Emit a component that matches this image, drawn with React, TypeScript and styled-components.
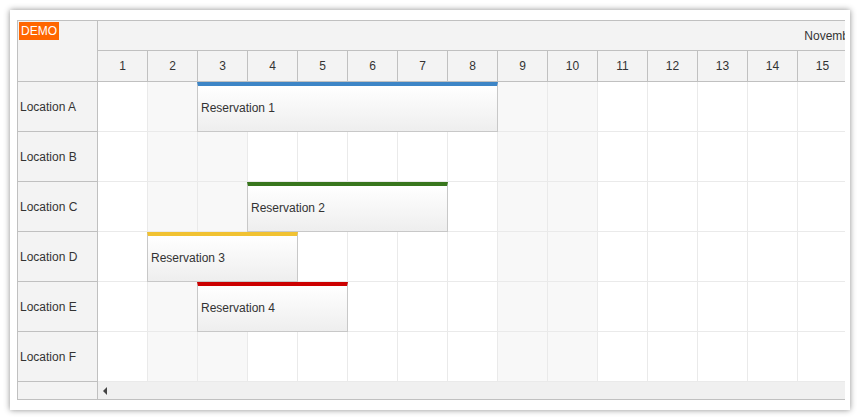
import { createGlobalStyle, styled } from 'styled-components'

const days = Array.from({ length: 15 }, (_, i) => i + 1)
const weekend = [2, 3, 9, 10]

interface Reservation {
  text: string
  start: number
  span: number
  color: string
}

const resources: { name: string; events: Reservation[] }[] = [
  { name: 'Location A', events: [{ text: 'Reservation 1', start: 2, span: 6, color: '#3d85c6' }] },
  { name: 'Location B', events: [] },
  { name: 'Location C', events: [{ text: 'Reservation 2', start: 3, span: 4, color: '#38761d' }] },
  { name: 'Location D', events: [{ text: 'Reservation 3', start: 1, span: 3, color: '#f1c232' }] },
  { name: 'Location E', events: [{ text: 'Reservation 4', start: 2, span: 3, color: '#cc0000' }] },
  { name: 'Location F', events: [] },
]

const App = () => {
  return (
    <>
      <Global />
      <Panel>
        <Scheduler>
          <LeftColumn>
            <Corner>
              <Demo>DEMO</Demo>
            </Corner>
            {resources.map((r) => (
              <RowHeader key={r.name}>{r.name}</RowHeader>
            ))}
            <CornerBottom />
          </LeftColumn>
          <Main>
            <MonthRow>
              <MonthCell>November 2025</MonthCell>
            </MonthRow>
            <DayRow>
              {days.map((d) => (
                <DayCell key={d}>{d}</DayCell>
              ))}
            </DayRow>
            {resources.map((r) => (
              <GridRow key={r.name}>
                {days.map((d) => (
                  <Cell key={d} $weekend={weekend.includes(d)} />
                ))}
                {r.events.map((e) => (
                  <Event
                    key={e.text}
                    $color={e.color}
                    style={{ left: e.start * 50 - 1, width: e.span * 50 + 1 }}
                  >
                    {e.text}
                  </Event>
                ))}
              </GridRow>
            ))}
            <ScrollStrip>
              <Arrow />
            </ScrollStrip>
          </Main>
        </Scheduler>
      </Panel>
    </>
  )
}

export default App

const Global = createGlobalStyle`
body {
  margin: 0;
  background: #ffffff;
  font-family: "Liberation Sans", Arial, sans-serif;
  font-size: 12px;
  color: #333333;
}
`

const Panel = styled.div`
margin: 10px;
width: 840px;
height: 400px;
box-sizing: border-box;
background: #ffffff;
box-shadow: 0 0 6px rgba(0, 0, 0, 0.45);
padding: 10px 5px 0 7px;
`

const Scheduler = styled.div`
display: flex;
width: 828px;
border-top: 1px solid #c0c0c0;
border-bottom: 1px solid #c0c0c0;
border-left: 1px solid #c0c0c0;
box-sizing: border-box;
`

const LeftColumn = styled.div`
width: 79px;
flex-shrink: 0;
display: flex;
flex-direction: column;
border-right: 1px solid #c0c0c0;
background: #f3f3f3;
`

const Corner = styled.div`
border-bottom: 1px solid #c0c0c0;
padding: 1px 0 0 1px;
height: 59px;
`

const Demo = styled.div`
display: inline-block;
background: #ff6600;
color: #ffffff;
font-size: 12px;
line-height: 18px;
padding: 0 2px;
`

const RowHeader = styled.div`
height: 49px;
border-bottom: 1px solid #c0c0c0;
display: flex;
align-items: center;
padding: 1px 0 0 2px;
box-sizing: border-box;
height: 50px;
`

const CornerBottom = styled.div`
height: 17px;
`

const Main = styled.div`
flex: 1;
overflow: hidden;
display: flex;
flex-direction: column;
`

const MonthRow = styled.div`
height: 29px;
border-bottom: 1px solid #c0c0c0;
background: #f3f3f3;
display: flex;
`

const MonthCell = styled.div`
width: 1498px;
flex-shrink: 0;
display: flex;
align-items: center;
justify-content: center;
`

const DayRow = styled.div`
height: 30px;
border-bottom: 1px solid #c0c0c0;
background: #f3f3f3;
display: flex;
`

const DayCell = styled.div`
width: 50px;
flex-shrink: 0;
box-sizing: border-box;
border-right: 1px solid #c0c0c0;
display: flex;
align-items: center;
justify-content: center;
`

const GridRow = styled.div`
position: relative;
height: 50px;
display: flex;
box-sizing: border-box;
border-bottom: 1px solid #eaeaea;
&:last-of-type {
  border-bottom: none;
}
`

const Cell = styled.div<{ $weekend: boolean }>`
width: 50px;
flex-shrink: 0;
box-sizing: border-box;
border-right: 1px solid #eaeaea;
background: ${(p) => (p.$weekend ? '#f8f8f8' : '#ffffff')};
`

const Event = styled.div<{ $color: string }>`
position: absolute;
top: 0;
height: 50px;
box-sizing: border-box;
border: 1px solid #c8c8c8;
border-top: 4px solid ${(p) => p.$color};
background: linear-gradient(to bottom, #ffffff, #eeeeee);
display: flex;
align-items: center;
padding: 0 0 1px 3px;
color: #333333;
white-space: nowrap;
overflow: hidden;
`

const ScrollStrip = styled.div`
height: 17px;
background: #f0f0f0;
display: flex;
align-items: center;
padding-left: 5px;
`

const Arrow = styled.div`
width: 0;
height: 0;
border-top: 4px solid transparent;
border-bottom: 4px solid transparent;
border-right: 4px solid #444444;
`
